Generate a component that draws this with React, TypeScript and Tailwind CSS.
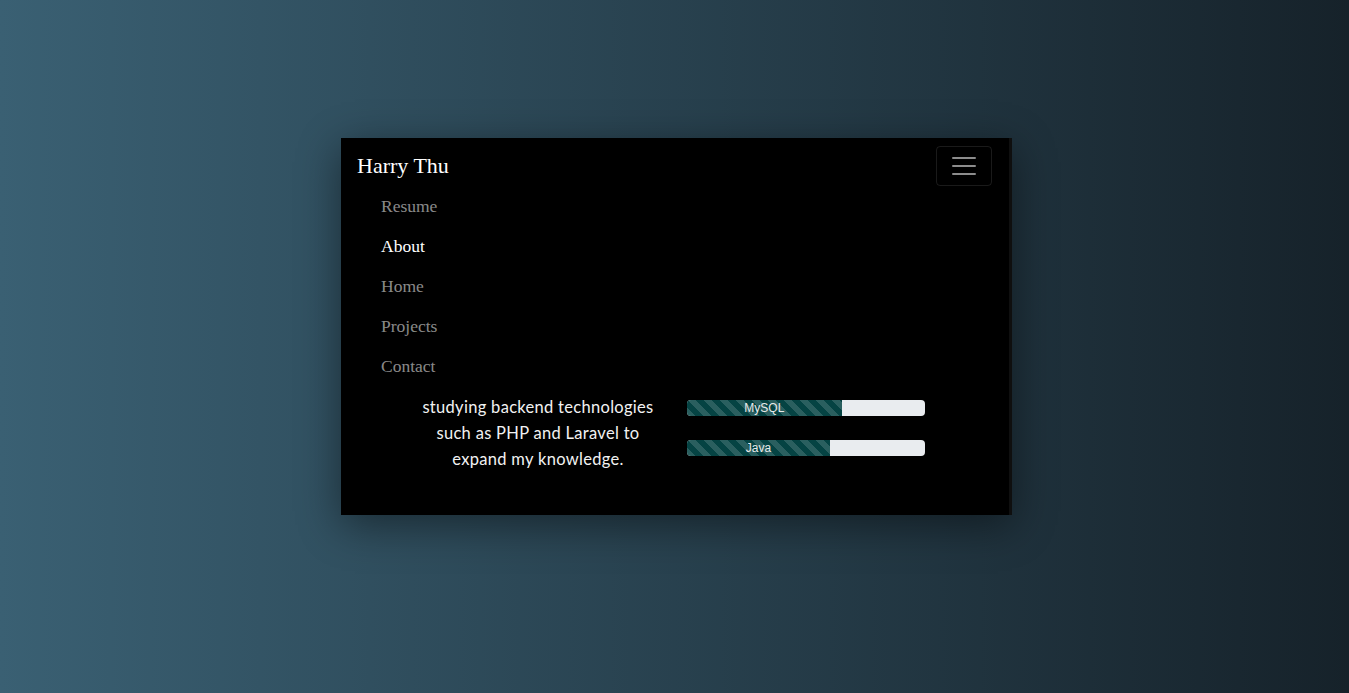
import React from "react";

const links = [
  { label: "Resume", active: false },
  { label: "About", active: true },
  { label: "Home", active: false },
  { label: "Projects", active: false },
  { label: "Contact", active: false },
];

const skills = [
  { name: "MySQL", pct: 65 },
  { name: "Java", pct: 60 },
];

export default function App() {
  return (
    <div className="min-h-screen w-full flex justify-center pt-[138px] pl-[4px] bg-[linear-gradient(to_right,#3a6073,#16222a)]">
      <div className="w-[671px] h-[377px] bg-black border-r-[3px] border-[#0f0f0f] shadow-[0_10px_40px_rgba(0,0,0,0.45)]">
        <nav className="px-4 py-2">
          <div className="flex items-center justify-between h-[40px]">
            <span className="text-[22px] text-white font-['Liberation_Serif',serif] leading-none">
              Harry Thu
            </span>
            <button className="w-[56px] h-[40px] mr-[1px] border border-[rgba(255,255,255,0.1)] rounded-[4px] flex items-center justify-center">
              <svg width="30" height="30" viewBox="0 0 30 30">
                <path
                  d="M4 7h22M4 15h22M4 23h22"
                  stroke="rgba(255,255,255,0.55)"
                  strokeWidth="2"
                  strokeLinecap="round"
                />
              </svg>
            </button>
          </div>
          <ul className="pl-6">
            {links.map((l) => (
              <li
                key={l.label}
                className={`h-[40px] flex items-center text-[17.5px] font-['Liberation_Serif',serif] ${
                  l.active ? "text-white" : "text-[rgba(255,255,255,0.55)]"
                }`}
              >
                {l.label}
              </li>
            ))}
          </ul>
        </nav>
        <div className="flex pl-[59px] gap-[11px]">
          <p className="w-[276px] text-center text-[16.5px] leading-[26px] text-[#f2f2f2] font-['Lato',sans-serif] tracking-[0.3px]">
            studying backend technologies
            <br />
            such as PHP and Laravel to
            <br />
            expand my knowledge.
          </p>
          <div className="w-[238px] flex flex-col gap-[24px] mt-[6px]">
            {skills.map((s) => (
              <div
                key={s.name}
                className="h-[16px] w-full rounded-[4px] bg-[#e9ecef] overflow-hidden flex"
              >
                <div
                  className="h-full flex items-center justify-center text-[12px] text-[#e8e8e8] font-['Liberation_Sans',sans-serif] bg-[#054343] bg-[linear-gradient(45deg,rgba(255,255,255,.15)_25%,transparent_25%,transparent_50%,rgba(255,255,255,.15)_50%,rgba(255,255,255,.15)_75%,transparent_75%,transparent)] bg-size-[16px_16px]"
                  style={{ width: `${s.pct}%` }}
                >
                  {s.name}
                </div>
              </div>
            ))}
          </div>
        </div>
      </div>
    </div>
  );
}
